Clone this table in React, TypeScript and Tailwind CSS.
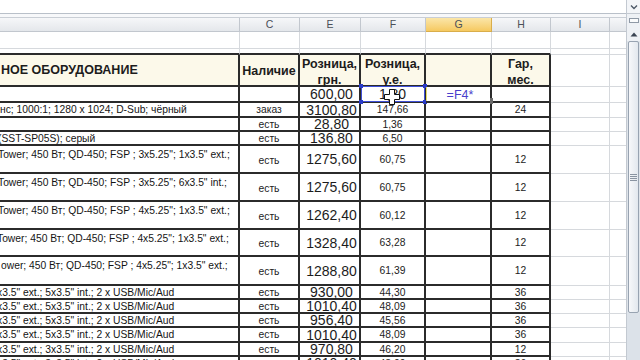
import React from "react";

const widths = ["w-[240px]", "w-[60px]", "w-[61px]", "w-[65px]", "w-[66px]", "w-[59px]", "w-[59px]", "w-[16px]"];

type R = {
  h: string;
  desc?: string;
  descMl?: string;
  c?: string;
  e?: string;
  f?: string;
  hh?: string;
  tall?: boolean;
};

const Q = '"';

const rows: R[] = [
  { h: "h-[15px]", desc: "нс; 1000:1; 1280 x 1024; D-Sub; чёрный", c: "заказ", e: "3100,80", f: "147,66", hh: "24" },
  { h: "h-[14px]", desc: "", c: "есть", e: "28,80", f: "1,36", hh: "" },
  { h: "h-[14px]", desc: "(SST-SP05S); серый", descMl: "-ml-[2px]", c: "есть", e: "136,80", f: "6,50", hh: "" },
  { h: "h-[28px]", tall: true, desc: `Tower; 450 Вт; QD-450; FSP ; 3x5.25${Q}; 1x3.5${Q} ext.;`, descMl: "-ml-[2px]", c: "есть", e: "1275,60", f: "60,75", hh: "12" },
  { h: "h-[28px]", tall: true, desc: `Tower; 450 Вт; QD-450; FSP ; 3x5.25${Q}; 6x3.5${Q} int.;`, descMl: "-ml-[2px]", c: "есть", e: "1275,60", f: "60,75", hh: "12" },
  { h: "h-[28px]", tall: true, desc: `Tower; 450 Вт; QD-450; FSP ; 4x5.25${Q}; 1x3.5${Q} ext.;`, descMl: "-ml-[2px]", c: "есть", e: "1262,40", f: "60,12", hh: "12" },
  { h: "h-[27px]", tall: true, desc: `Tower; 450 Вт; QD-450; FSP ; 4x5.25${Q}; 1x3.5${Q} ext.;`, descMl: "-ml-[3px]", c: "есть", e: "1328,40", f: "63,28", hh: "12" },
  { h: "h-[29px]", tall: true, desc: `ower; 450 Вт; QD-450; FSP ; 4x5.25${Q}; 1x3.5${Q} ext.;`, descMl: "ml-[1px]", c: "есть", e: "1288,80", f: "61,39", hh: "12" },
  { h: "h-[14px]", desc: `x3.5${Q} ext.; 5x3.5${Q} int.; 2 x USB/Mic/Aud`, descMl: "-ml-[3px]", c: "есть", e: "930,00", f: "44,30", hh: "36" },
  { h: "h-[14px]", desc: `x3.5${Q} ext.; 5x3.5${Q} int.; 2 x USB/Mic/Aud`, descMl: "-ml-[3px]", c: "есть", e: "1010,40", f: "48,09", hh: "36" },
  { h: "h-[14px]", desc: `x3.5${Q} ext.; 5x3.5${Q} int.; 2 x USB/Mic/Aud`, descMl: "-ml-[3px]", c: "есть", e: "956,40", f: "45,56", hh: "36" },
  { h: "h-[15px]", desc: `x3.5${Q} ext.; 5x3.5${Q} int.; 2 x USB/Mic/Aud`, descMl: "-ml-[3px]", c: "есть", e: "1010,40", f: "48,09", hh: "36" },
  { h: "h-[14px]", desc: `x3.5${Q} ext.; 3x3.5${Q} int.; 2 x USB/Mic/Aud`, descMl: "-ml-[3px]", c: "есть", e: "970,80", f: "46,20", hh: "12" },
  { h: "h-[14px]", desc: `x3.5${Q} ext.; 3x3.5${Q} int.; 2 x USB/Mic/Aud`, descMl: "-ml-[3px]", c: "есть", e: "1010,40", f: "48,09", hh: "36" },
];

const tb = "border-r-2 border-b-2 border-[#2b2b2b]";
const gb = "border-r border-b border-[#d6d9dd]";

function GridTail() {
  return (
    <>
      <div className={`${widths[6]} shrink-0 ${gb}`} />
      <div className={`${widths[7]} shrink-0 border-b border-[#d6d9dd]`} />
    </>
  );
}

function DataRow({ r }: { r: R }) {
  const v = r.tall ? "items-center pt-[3px]" : "items-center pt-[1px]";
  return (
    <div className={`flex ${r.h} shrink-0`}>
      <div className={`${widths[0]} shrink-0 ${tb} overflow-hidden flex ${r.tall ? "items-start pt-[3px]" : "items-center pt-[1px]"}`}>
        <span className={`whitespace-nowrap text-[10.3px] leading-[12px] text-[#141414] ${r.descMl ?? ""}`}>{r.desc}</span>
      </div>
      <div className={`${widths[1]} shrink-0 ${tb} flex justify-center ${v}`}>
        <span className="text-[10.3px] leading-[12px]">{r.c}</span>
      </div>
      <div className={`${widths[2]} shrink-0 ${tb} flex justify-center items-center pl-[4px]`}>
        <span className="text-[14px] leading-[14px]">{r.e}</span>
      </div>
      <div className={`${widths[3]} shrink-0 ${tb} flex justify-center items-center pt-[1px]`}>
        <span className="text-[10.3px] leading-[12px]">{r.f}</span>
      </div>
      <div className={`${widths[4]} shrink-0 ${tb}`} />
      <div className={`${widths[5]} shrink-0 ${tb} flex justify-center items-center pt-[1px]`}>
        <span className="text-[10.3px] leading-[12px]">{r.hh}</span>
      </div>
      <GridTail />
    </div>
  );
}

function Scrollbar() {
  return (
    <div className="w-[14px] h-[360px] shrink-0 flex flex-col bg-[#dfe4ea] border-l border-[#c3c9d1]">
      <div className="h-[14px] shrink-0 bg-[#f3f5f8] border-b border-[#c3c9d1] flex items-center justify-center">
        <svg width="8" height="6" viewBox="0 0 8 6">
          <path d="M1 1.5 L4 4.5 L7 1.5" fill="none" stroke="#4d5968" strokeWidth="1.4" />
        </svg>
      </div>
      <div className="h-[13px] shrink-0 bg-[#eef1f5] flex items-center justify-center">
        <div className="w-[10px] h-[5px] border border-[#8f99a6] bg-[#fafbfc]" />
      </div>
      <div className="h-[14px] shrink-0 bg-[#eef1f5] flex items-center justify-center">
        <svg width="8" height="5" viewBox="0 0 8 5">
          <path d="M0.5 4.5 L4 0.5 L7.5 4.5 Z" fill="#3a4452" />
        </svg>
      </div>
      <div className="h-[272px] shrink-0 mx-[1px] rounded-[2px] border border-[#98a3b1] bg-gradient-to-r from-[#f7f8fa] to-[#e3e8ee] flex items-center justify-center">
        <div className="flex flex-col gap-[1px]">
          <div className="w-[7px] h-[1px] bg-[#8a94a1]" />
          <div className="w-[7px] h-[1px] bg-[#8a94a1]" />
          <div className="w-[7px] h-[1px] bg-[#8a94a1]" />
          <div className="w-[7px] h-[1px] bg-[#8a94a1]" />
        </div>
      </div>
      <div className="flex-1 bg-[#dce2e9]" />
    </div>
  );
}

export default function App() {
  const hdr = "h-[14px] shrink-0 border-r border-b border-[#c2c7ce] bg-gradient-to-b from-[#f6f7f9] to-[#e4e7eb] flex items-center justify-center text-[10.5px] text-[#4a4f57]";
  return (
    <div className="w-[640px] h-[360px] overflow-hidden bg-white flex font-['Liberation_Sans',Arial,sans-serif] text-[#1c1c1c]">
      <div className="w-[626px] shrink-0 flex flex-col relative">
        {/* formula bar remnant */}
        <div className="h-[14px] shrink-0 border-b border-[#b9c0c9] bg-white" />
        <div className="h-[4px] shrink-0 border-b border-[#c9ced5] bg-[#f7f8fa]" />
        {/* column headers */}
        <div className="flex shrink-0">
          <div className={`${widths[0]} ${hdr}`} />
          <div className={`${widths[1]} ${hdr}`}>C</div>
          <div className={`${widths[2]} ${hdr}`}>E</div>
          <div className={`${widths[3]} ${hdr}`}>F</div>
          <div className={`${widths[4]} h-[14px] shrink-0 border-r border-b border-[#d9ad4a] bg-gradient-to-b from-[#fbe6a8] to-[#f5c95f] flex items-center justify-center text-[10.5px] text-[#4a4f57]`}>G</div>
          <div className={`${widths[5]} ${hdr}`}>H</div>
          <div className={`${widths[6]} ${hdr}`}>I</div>
          <div className={`${widths[7]} ${hdr} border-r-0`} />
        </div>
        {/* row 1 */}
        <div className="flex h-[17px] shrink-0">
          {[0, 1, 2, 3, 4, 5].map((i) => (
            <div key={i} className={`${widths[i]} shrink-0 ${gb}`} />
          ))}
          <GridTail />
        </div>
        {/* row 2 (short, thick bottom = table top) */}
        <div className="flex h-[6px] shrink-0">
          {[0, 1, 2, 3, 4, 5].map((i) => (
            <div key={i} className={`${widths[i]} shrink-0 border-r border-[#d6d9dd] border-b-2 border-b-[#2b2b2b]`} />
          ))}
          <GridTail />
        </div>
        {/* table header row */}
        <div className="flex h-[32px] shrink-0 font-bold">
          <div className={`${widths[0]} shrink-0 ${tb} bg-[#fcf9ea] flex items-center overflow-hidden`}>
            <span className="whitespace-nowrap text-[12.5px] ml-[1px] pt-[1px]">НОЕ ОБОРУДОВАНИЕ</span>
          </div>
          <div className={`${widths[1]} shrink-0 ${tb} bg-[#fcf9ea] flex items-center justify-center`}>
            <span className="text-[12.5px] pt-[2px]">Наличие</span>
          </div>
          <div className={`${widths[2]} shrink-0 ${tb} bg-[#fcf9ea] flex flex-col items-center text-[12.5px] leading-[16px] pt-[1px]`}>
            <span>Розница,</span>
            <span>грн.</span>
          </div>
          <div className={`${widths[3]} shrink-0 ${tb} bg-[#fcf9ea] flex flex-col items-center text-[12.5px] leading-[16px] pt-[1px]`}>
            <span>Розница,</span>
            <span>у.е.</span>
          </div>
          <div className={`${widths[4]} shrink-0 ${tb} bg-[#fcf9ea]`} />
          <div className={`${widths[5]} shrink-0 ${tb} bg-[#fcf9ea] flex flex-col items-center text-[12.5px] leading-[16px] pt-[1px]`}>
            <span>Гар,</span>
            <span>мес.</span>
          </div>
          <GridTail />
        </div>
        {/* row with formula */}
        <div className="flex h-[16px] shrink-0">
          <div className={`${widths[0]} shrink-0 ${tb}`} />
          <div className={`${widths[1]} shrink-0 ${tb}`} />
          <div className={`${widths[2]} shrink-0 ${tb} flex justify-center items-center pl-[4px]`}>
            <span className="text-[14px] leading-[14px]">600,00</span>
          </div>
          <div className={`${widths[3]} shrink-0 ${tb} relative flex justify-center items-center`}>
            <span className="text-[14px] leading-[14px]">1,80</span>
            <div className="absolute left-0 top-[-1px] right-[-1px] bottom-[-1px] border border-[#3f4fd6]" />
            <div className="absolute left-[-2px] top-[-3px] w-[4px] h-[4px] bg-[#2a3bc8]" />
            <div className="absolute left-[-2px] bottom-[-3px] w-[4px] h-[4px] bg-[#2a3bc8]" />
            <div className="absolute right-[-3px] top-[-3px] w-[4px] h-[4px] bg-[#2a3bc8]" />
            <div className="absolute right-[-3px] bottom-[-3px] w-[4px] h-[4px] bg-[#2a3bc8]" />
            <svg className="absolute left-[23px] top-[2px]" width="16" height="16" viewBox="0 0 16 16">
              <path d="M5.5 0.5 H10.5 V5.5 H15.5 V10.5 H10.5 V15.5 H5.5 V10.5 H0.5 V5.5 H5.5 Z" fill="#ffffff" stroke="#111" strokeWidth="1" />
            </svg>
          </div>
          <div className={`${widths[4]} shrink-0 ${tb} relative flex justify-center items-center pt-[1px]`}>
            <div className="absolute left-0 top-0 bottom-0 w-[1px] bg-[#e6dc6a]" />
            <span className="text-[12.5px] leading-[14px] pl-[4px] text-[#4a3fcc]">=F4*</span>
            <div className="absolute right-[-3px] bottom-[-3px] w-[3px] h-[6px] bg-[#6b6b6b]" />
          </div>
          <div className={`${widths[5]} shrink-0 ${tb}`} />
          <GridTail />
        </div>
        {rows.map((r, i) => (
          <DataRow key={i} r={r} />
        ))}
      </div>
      <Scrollbar />
    </div>
  );
}
